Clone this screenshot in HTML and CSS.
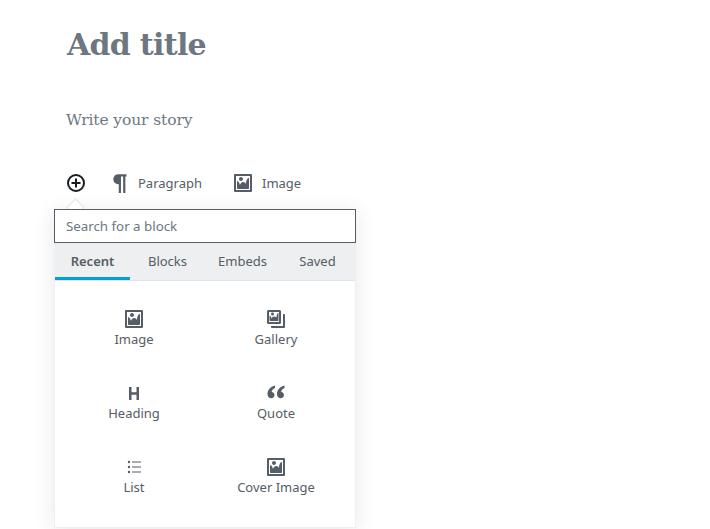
FILE: index.html
```html
<!DOCTYPE html>
<html lang="en">
<head>
    <meta charset="UTF-8">
    <title>Add title</title>
    <link rel="stylesheet" href="styles.css">
</head>
<body>
    <div class="editor">
        <h1 class="post-title">Add title</h1>
        <p class="post-body">Write your story</p>

        <!-- Toolbar under the last block -->
        <div class="quick-bar">
            <svg class="add-icon" width="20" height="20" viewBox="0 0 20 20">
                <circle cx="10" cy="10" r="8" fill="none" stroke="#191e23" stroke-width="2"/>
                <path d="M9 5.5h2V9h3.500v2H11v3.500H9V11H5.500V9H9z" fill="#191e23"/>
            </svg>
            <span class="quick-item para-item">
                <svg width="22" height="22" viewBox="0 0 20 20"><path d="M15 2H7.540c-.83 0-1.590.2-2.280.6-.7.41-1.250.96-1.650 1.650C3.200 4.940 3 5.700 3 6.540s.2 1.610.61 2.290c.4.68.95 1.230 1.650 1.640.69.41 1.450.61 2.280.61h.43V19h2V4h2v15h2V4H15V2z"/></svg>
                Paragraph
            </span>
            <span class="quick-item">
                <svg width="20" height="20" viewBox="0 0 20 20"><use href="#img-icon"/></svg>
                Image
            </span>
        </div>

        <!-- Block inserter popup -->
        <div class="inserter">
            <span class="caret"></span>
            <div class="search">Search for a block</div>
            <div class="tabs">
                <div class="tab active">Recent</div>
                <div class="tab">Blocks</div>
                <div class="tab">Embeds</div>
                <div class="tab">Saved</div>
            </div>
            <div class="block-grid">
                <div class="block-btn">
                    <svg width="20" height="20" viewBox="0 0 20 20"><use href="#img-icon"/></svg>
                    <span>Image</span>
                </div>
                <div class="block-btn">
                    <svg width="20" height="20" viewBox="0 0 20 20">
                        <path d="M2.500 1h11c.83 0 1.500.67 1.500 1.500v11c0 .83-.67 1.500-1.500 1.500h-11C1.670 15 1 14.330 1 13.500v-11C1 1.670 1.670 1 2.500 1zM13 13V3H3v10h10zM8 5c0-.83-.67-1.500-1.500-1.500S5 4.170 5 5s.67 1.500 1.500 1.500S8 5.830 8 5zm2.500 3.500s0-4.500 2-4.500v7.500c0 .28-.22.5-.5.5H4c-.28 0-.5-.22-.5-.5V6.500c1.500 0 2 3 2 3s.8-2 2.500-2 2.500 1 2.500 1z"/>
                        <path d="M17 5h1c.55 0 1 .45 1 1v12c0 .55-.45 1-1 1H6c-.55 0-1-.45-1-1v-1h12V5z"/>
                    </svg>
                    <span>Gallery</span>
                </div>
                <div class="block-btn">
                    <svg width="20" height="20" viewBox="0 0 20 20"><path d="M12.500 4v5.200h-5V4H5v13h2.500v-5.200h5V17H15V4z"/></svg>
                    <span>Heading</span>
                </div>
                <div class="block-btn">
                    <svg width="20" height="20" viewBox="0 1 20 20">
                        <path d="M9 3.500C4.500 4.500 1.500 8 1.500 12c0 2.500 1.500 4.300 3.700 4.300 1.900 0 3.300-1.400 3.300-3.200 0-1.700-1.200-3-2.900-3.100.3-1.700 1.600-3.200 3.400-3.900z"/>
                        <path d="M18.500 3.500C14 4.500 11 8 11 12c0 2.500 1.500 4.300 3.700 4.300 1.900 0 3.300-1.400 3.300-3.200 0-1.700-1.200-3-2.900-3.100.3-1.700 1.600-3.200 3.400-3.900z"/>
                    </svg>
                    <span>Quote</span>
                </div>
                <div class="block-btn">
                    <svg width="20" height="20" viewBox="0 0 20 20">
                        <circle cx="5" cy="5" r="1.200"/><circle cx="5" cy="10" r="1.200"/><circle cx="5" cy="15" r="1.200"/>
                        <path d="M8 4.500h9v1H8zM8 9.500h9v1H8zM8 14.500h9v1H8z"/>
                    </svg>
                    <span>List</span>
                </div>
                <div class="block-btn">
                    <svg width="20" height="20" viewBox="0 0 20 20"><use href="#img-icon"/></svg>
                    <span>Cover Image</span>
                </div>
            </div>
        </div>
    </div>

    <svg class="defs" width="0" height="0">
        <symbol id="img-icon" viewBox="0 0 20 20">
            <path d="M2.250 1h15.500c.69 0 1.250.56 1.250 1.250v15.500c0 .69-.56 1.250-1.250 1.250H2.250C1.560 19 1 18.440 1 17.750V2.250C1 1.560 1.560 1 2.250 1zM17 17V3H3v14h14zM10 6c0-1.100-.9-2-2-2s-2 .9-2 2 .9 2 2 2 2-.9 2-2zm3 5s0-6 3-6v10c0 .55-.45 1-1 1H5c-.55 0-1-.45-1-1V8c2 0 3 4 3 4s1-3 3-3 3 2 3 2z"/>
        </symbol>
    </svg>
</body>
</html>
```

FILE: styles.css
```css
html, body {
    margin: 0;
    padding: 0;
    height: 529px;
    overflow: hidden;
    background: white;
    font-family: "Noto Sans", sans-serif;
    color: #555d66;
}
svg {
    display: block;
    fill: #555d66;
}
.defs {
    position: absolute;
}
.editor {
    padding-left: 54px;
}
.post-title {
    margin: 0;
    padding: 25px 0 0 13px;
    font-family: "DejaVu Serif", serif;
    font-size: 30px;
    line-height: 40px;
    font-weight: bold;
    letter-spacing: -0.7px;
    color: #6c7781;
}
.post-body {
    margin: 0;
    padding: 41px 0 0 12px;
    font-family: "DejaVu Serif", serif;
    font-size: 15.5px;
    line-height: 28px;
    letter-spacing: -0.1px;
    color: #6c7781;
}
.quick-bar {
    display: flex;
    align-items: center;
    height: 20px;
    margin-top: 39px;
    padding-left: 12px;
    font-size: 13px;
}
.add-icon {
    margin-right: 24px;
}
.quick-item {
    display: flex;
    align-items: center;
    gap: 9px;
}
.quick-item svg {
    flex: none;
}
.para-item {
    gap: 6px;
    margin-right: 31px;
}
.inserter {
    position: relative;
    width: 300px;
    height: 318px;
    margin-top: 16px;
    border: 1px solid #edeff0;
    border-top: 0;
    box-shadow: 0 3px 20px rgba(25, 30, 35, 0.1);
    background: white;
}
.caret {
    position: absolute;
    top: -8px;
    left: 14px;
    width: 11px;
    height: 11px;
    border: 1px solid #e2e4e7;
    background: white;
    transform: rotate(45deg);
}
.search {
    position: relative;
    height: 32px;
    margin: 0 -1px;
    padding-left: 11px;
    border: 1px solid #555d66;
    background: white;
    font-size: 13.3px;
    line-height: 32px;
    color: #6c7781;
}
.tabs {
    display: grid;
    grid-template-columns: repeat(4, 75px);
    height: 37px;
    border-bottom: 1px solid #e2e4e7;
    background: #edeff0;
    font-size: 13px;
}
.tab {
    height: 34px;
    line-height: 36px;
    text-align: center;
}
.active {
    border-bottom: 3px solid #00a0d2;
    font-weight: 600;
}
.block-grid {
    display: grid;
    grid-template-columns: 142px 142px;
    grid-auto-rows: 74px;
    padding: 28px 8px 0;
}
.block-btn {
    display: flex;
    flex-direction: column;
    align-items: center;
    font-size: 13px;
    line-height: 18px;
}
.block-btn span {
    margin-top: 1px;
}
```
